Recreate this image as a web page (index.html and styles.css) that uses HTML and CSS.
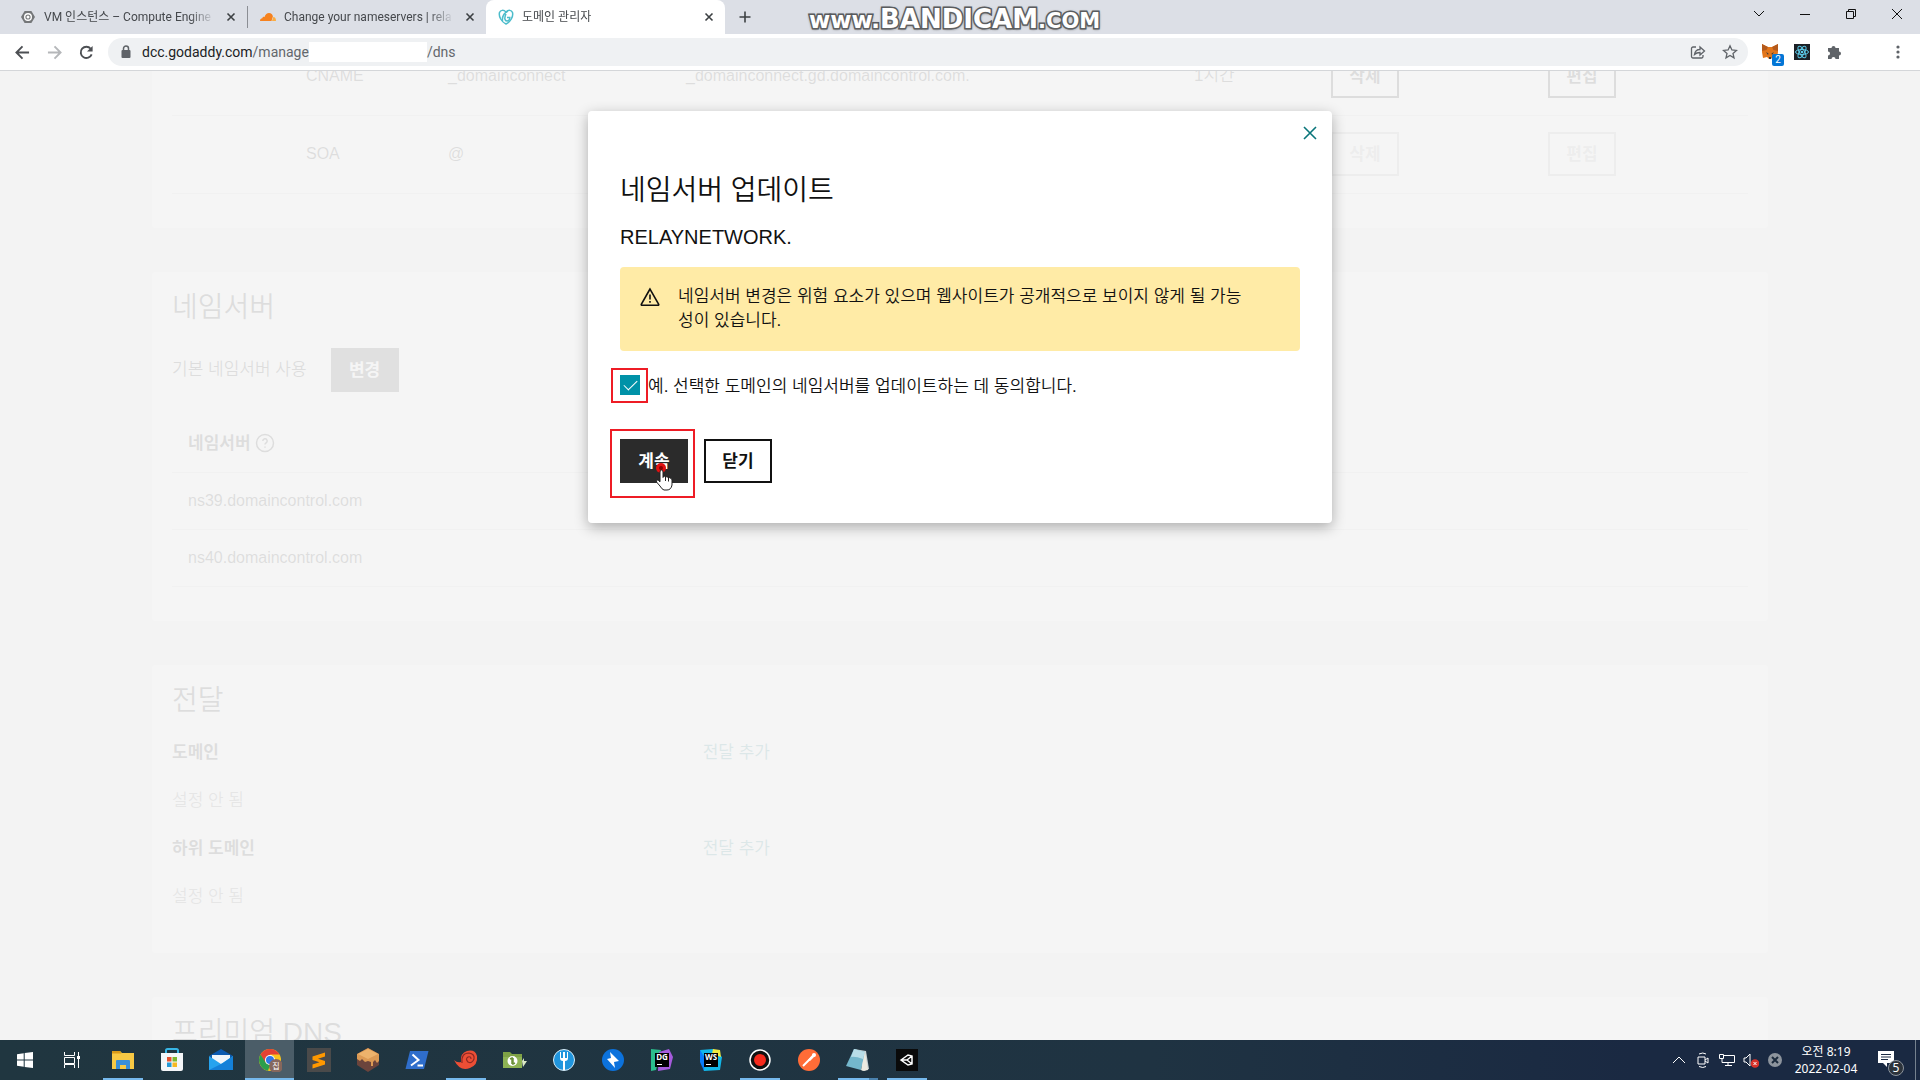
FILE: index.html
```html
<!DOCTYPE html>
<html lang="ko">
  <head>
    <meta charset="UTF-8">
    <title>도메인 관리자</title>
    <link rel="stylesheet" href="styles.css">
  </head>
  <body>
    <header class="browser">
      <div class="tabstrip">
        <div class="tab">
          <svg class="favicon" viewBox="0 0 16 16"><path d="M4.6 2h6.8L15 8l-3.600 6H4.600L1 8z" fill="#757779"/><circle cx="8" cy="8" r="3.300" fill="none" stroke="#fff" stroke-width="1.400"/><circle cx="8" cy="8" r="1.500" fill="#fff"/></svg>
          <span class="tab-title">VM 인스턴스 – Compute Engine</span>
          <button class="tab-close" aria-label="탭 닫기"><svg viewBox="0 0 16 16"><path d="M4.500 4.500l7 7M11.500 4.500l-7 7"/></svg></button>
        </div>
        <div class="tab divided">
          <svg class="favicon" viewBox="0 0 16 16"><path d="M0 12c0-1.700 1-2.600 2.300-2.700C2.500 8 3.700 7.500 4.600 8 5.300 5.500 7 4 9 4c2.200 0 3.600 1.500 3.900 3.500L11.500 12z" fill="#f6821f"/><path d="M12 12l1.300-4C15 8 16 9.500 16 12z" fill="#fbad41"/></svg>
          <span class="tab-title">Change your nameservers | rela</span>
          <button class="tab-close" aria-label="탭 닫기"><svg viewBox="0 0 16 16"><path d="M4.500 4.500l7 7M11.500 4.500l-7 7"/></svg></button>
        </div>
        <div class="tab active">
          <svg class="favicon" viewBox="0 0 16 16" fill="none" stroke="#4cbccb" stroke-width="1.500"><path d="M8 3C5.500.500 2.500 1 1.500 3.500.500 7.500 3.500 13 8 15c4.500-2 7.500-7.500 6.500-11.500C13.500 1 10.500.500 8 3z"/><path d="M4.500 12C4 7.500 6 4 10 2M9 8.500h2.800c0 2.500-1.300 3.500-2.800 3.500-2.300 0-3-3-1-7"/></svg>
          <span class="tab-title">도메인 관리자</span>
          <button class="tab-close" aria-label="탭 닫기"><svg viewBox="0 0 16 16"><path d="M4.500 4.500l7 7M11.500 4.500l-7 7"/></svg></button>
        </div>
        <button class="new-tab" aria-label="새 탭"><svg viewBox="0 0 16 16"><path d="M8 2.500v11M2.500 8h11"/></svg></button>
        <div class="watermark"><span class="wm-www">www.</span><span class="wm-name">BANDICAM</span><span class="wm-com">.COM</span></div>
        <div class="window-buttons">
          <button aria-label="탭 검색"><svg viewBox="0 0 12 12"><path d="M1 3l5 5 5-5"/></svg></button>
          <button aria-label="최소화"><svg viewBox="0 0 12 12"><path d="M1 6.500h10"/></svg></button>
          <button aria-label="이전 크기로"><svg viewBox="0 0 12 12"><path d="M1.500 3.500h7v7h-7zM3.500 3.500v-2h7v7h-2"/></svg></button>
          <button aria-label="닫기"><svg viewBox="0 0 12 12"><path d="M1 1l10 10M11 1L1 11"/></svg></button>
        </div>
      </div>
      <div class="toolbar">
        <button class="nav-button" aria-label="뒤로"><svg viewBox="0 0 16 16"><path d="M15 8H2M8 1.500L1.500 8 8 14.500"/></svg></button>
        <button class="nav-button off" aria-label="앞으로"><svg viewBox="0 0 16 16"><path d="M1 8h13M8 1.500L14.500 8 8 14.500"/></svg></button>
        <button class="nav-button" aria-label="새로고침"><svg viewBox="0 0 16 16"><path d="M13.500 10A6 6 0 1 1 12.500 4"/><path d="M14.500 1v6h-6z" fill="#4c4f53" stroke="none"/></svg></button>
        <div class="address">
          <svg class="lock" viewBox="0 0 12 14"><rect x="1.500" y="5" width="9" height="8" rx="1" fill="#5f6368"/><path d="M3.500 5V3.500a2.500 2.500 0 0 1 5 0V5" fill="none" stroke="#5f6368" stroke-width="1.500"/></svg>
          <span class="url"><b>dcc.godaddy.com</b>/manage</span>
          <span class="redacted"></span>
          <span class="url">/dns</span>
          <div class="address-actions">
            <svg viewBox="0 0 16 16"><path d="M6 3H3a1.500 1.500 0 0 0-1.500 1.500v8A1.500 1.500 0 0 0 3 14h8.500a1.500 1.500 0 0 0 1.500-1.500V11"/><path d="M4.500 10.500c.5-3.500 2.500-5 5.500-5V3l4.500 4L10 11V8.500c-2.500 0-4 .5-5.500 2z"/></svg>
            <svg viewBox="0 0 16 16"><path d="M8 1.800l1.900 4.200 4.600.4-3.500 3 1 4.500L8 11.500l-4 2.400 1-4.500-3.500-3 4.600-.4z"/></svg>
          </div>
        </div>
        <div class="extensions">
          <div class="fox">
            <svg viewBox="0 0 16 16"><path d="M0 0l6 3h4l6-3v8l-1 6-4-1-2 2H7l-2-2-4 1-1-6z" fill="#e2761b"/><path d="M0 0l6 3-1.500 3L0 7zM16 0l-6 3 1.500 3L16 7z" fill="#b45a1c"/><path d="M4 8l2.500 1.500L6 11zM12 8L9.500 9.500 10 11zM7 13h2v2H7z" fill="#3a3a3a"/></svg>
            <span class="fox-count">2</span>
          </div>
          <svg class="react" viewBox="0 0 16 16"><path d="M0 0h16v16H0z" fill="#1c2026"/><g fill="none" stroke="#5ccbea"><ellipse cx="8" cy="8" rx="6.500" ry="2.500"/><ellipse cx="8" cy="8" rx="6.500" ry="2.500" transform="rotate(60 8 8)"/><ellipse cx="8" cy="8" rx="6.500" ry="2.500" transform="rotate(120 8 8)"/></g><circle cx="8" cy="8" r="1.300" fill="#5ccbea"/></svg>
          <svg class="puzzle" viewBox="0 0 16 16"><path d="M2 4h3.500a2 2 0 1 1 4 0H13v3.500a2 2 0 1 1 0 4V15H9.500a2 2 0 0 0-4 0H2v-3.500a2 2 0 0 0 0-4z" fill="#5f6368"/></svg>
          <svg class="dots" viewBox="0 0 16 16" fill="#5f6368"><circle cx="8" cy="3" r="1.600"/><circle cx="8" cy="8" r="1.600"/><circle cx="8" cy="13" r="1.600"/></svg>
        </div>
      </div>
    </header>

    <div class="viewport">
      <main class="page">
        <section class="card records">
          <table class="record-table">
            <colgroup><col class="c-check"><col class="c-type"><col class="c-name"><col class="c-value"><col class="c-ttl"><col class="c-delete"><col></colgroup>
            <tr>
              <td></td>
              <td>CNAME</td>
              <td>_domainconnect</td>
              <td>_domainconnect.gd.domaincontrol.com.</td>
              <td class="ttl">1시간</td>
              <td><button class="btn">삭제</button></td>
              <td><button class="btn">편집</button></td>
            </tr>
            <tr>
              <td></td>
              <td>SOA</td>
              <td>@</td>
              <td></td>
              <td></td>
              <td><button class="btn" disabled>삭제</button></td>
              <td><button class="btn" disabled>편집</button></td>
            </tr>
          </table>
        </section>

        <section class="card">
          <h2>네임서버</h2>
          <div class="ns-current">
            <span>기본 네임서버 사용</span>
            <button class="btn primary">변경</button>
          </div>
          <table class="ns-table">
            <tr><th>네임서버 <svg class="help" viewBox="0 0 20 20"><circle cx="10" cy="10" r="8.500"/><path d="M7.800 8a2.200 2.200 0 1 1 3.200 2c-.8.400-1 .8-1 1.500M10 13.500v1.300"/></svg></th></tr>
            <tr><td>ns39.domaincontrol.com</td></tr>
            <tr><td>ns40.domaincontrol.com</td></tr>
          </table>
        </section>

        <section class="card forwarding">
          <h2>전달</h2>
          <div class="forward-grid">
            <strong>도메인</strong>
            <a href="#">전달 추가</a>
            <span class="unset">설정 안 됨</span>
            <strong>하위 도메인</strong>
            <a href="#">전달 추가</a>
            <span class="unset">설정 안 됨</span>
          </div>
        </section>

        <section class="card">
          <h2>프리미엄 DNS</h2>
        </section>
      </main>

      <div class="overlay">
        <div class="modal" role="dialog" aria-labelledby="modal-title">
          <div class="modal-head">
            <button class="modal-close" aria-label="닫기"><svg viewBox="0 0 20 20"><path d="M4 4l12 12M16 4L4 16"/></svg></button>
          </div>
          <div class="modal-body">
            <h1 id="modal-title">네임서버 업데이트</h1>
            <p class="domain">RELAYNETWORK.</p>
            <div class="alert">
              <svg viewBox="0 0 20 20"><path d="M10 2L1.300 17.300q-.3.900.7.900h16q1 0 .7-.9zM10 7.500v5M10 14v1.800"/></svg>
              <p>네임서버 변경은 위험 요소가 있으며 웹사이트가 공개적으로 보이지 않게 될 가능성이 있습니다.</p>
            </div>
            <div class="consent">
              <span class="marked mark-check"><input type="checkbox" id="agree" checked></span>
              <label for="agree">예. 선택한 도메인의 네임서버를 업데이트하는 데 동의합니다.</label>
            </div>
            <div class="actions">
              <span class="marked mark-button">
                <button class="btn primary">계속</button>
                <svg class="pointer" viewBox="0 0 22 30"><circle cx="8" cy="7" r="5" fill="#e01010"/><circle cx="8" cy="7" r="2" fill="#8a0000"/><path d="M7 11q0-2 1.500-2t1.500 2v5.500l1-1.500 2 .5 1 .5 2 .3 1 .7q2 .2 2 2V24q-1 5-5 5h-3q-2-.5-4-4l-3.500-4q-.7-1.500.7-2 1 0 2.800 1.800z" fill="#fff" stroke="#222"/><path d="M12.500 15.500V20M15.500 16v4.500" stroke="#222" fill="none"/></svg>
              </span>
              <button class="btn">닫기</button>
            </div>
          </div>
        </div>
      </div>
    </div>

    <footer class="taskbar">
      <nav class="apps">
        <button class="app" aria-label="시작"><svg viewBox="0 0 24 24" fill="#fff"><path d="M4 6.300l6.700-1v6.200H4zM11.700 5.100L20 4v7.500h-8.300zM4 12.500h6.700v6.200L4 17.700zM11.700 12.500H20V20l-8.300-1.100z"/></svg></button>
        <button class="app" aria-label="작업 보기"><svg viewBox="0 0 24 24" fill="none" stroke="#fff"><path d="M2.500 4v3.500h10V4M2.500 9.500h10v6h-10zM2.500 20v-3.500h10V20M16.500 4v16"/><path d="M15 8h3v3h-3z" fill="#fff" stroke="none"/></svg></button>
        <button class="app running" aria-label="파일 탐색기"><svg viewBox="0 0 24 24"><path d="M1 3h8l2 2h12v16H1z" fill="#f8c944"/><path d="M1 3h8l1.500 2.500H1z" fill="#d99a18"/><path d="M5 21v-8q0-1 1-1h12q1 0 1 1v8h-4v-4H9v4z" fill="#3a8fd8"/></svg></button>
        <button class="app" aria-label="Store"><svg viewBox="0 0 24 24"><path d="M6 7V2.500Q6 1 7.500 1h9Q18 1 18 2.500V7" fill="none" stroke="#38b6e6" stroke-width="2"/><path d="M1 5h22v16q0 2-2 2H3q-2 0-2-2z" fill="#f4f6f8"/><path d="M7 9h4.500v4.500H7z" fill="#e8502b"/><path d="M12.500 9H17v4.500h-4.500z" fill="#7cb82f"/><path d="M7 14.500h4.500V19H7z" fill="#2499d6"/><path d="M12.500 14.500H17V19h-4.500z" fill="#f6b820"/></svg></button>
        <button class="app" aria-label="메일"><svg viewBox="0 0 24 24"><path d="M0 8l12-7 12 7-12 7z" fill="#0d5bb0"/><path d="M3 7h18v5l-9 5-9-5z" fill="#f2f6fa"/><path d="M0 8l12 8 12-8v14H0z" fill="#26a3ee"/><path d="M0 22l14-7L24 8v14z" fill="#1480d8"/></svg></button>
        <button class="app current" aria-label="Chrome"><svg viewBox="0 0 24 24"><circle cx="12" cy="12" r="11" fill="#f9c51c"/><path d="M2.500 6.500A11 11 0 0 1 21.500 6.500H12L7 15z" fill="#e34133"/><path d="M2.500 6.500L8 15l4 2-2 5.800A11 11 0 0 1 2.500 6.500z" fill="#2c9e4b"/><circle cx="12" cy="12" r="5" fill="#fff"/><circle cx="12" cy="12" r="4" fill="#2f78e8"/><circle cx="18" cy="18" r="7" fill="#86675d"/><text x="18" y="21" text-anchor="middle" class="chrome-user">집</text></svg></button>
        <button class="app" aria-label="Sublime Text"><svg viewBox="0 0 24 24"><path d="M0 0h24v24H0z" fill="#4a4a4a"/><path d="M5.500 8.500L18 4.500v4l-7 2.200 7 2.300v3.500L5.500 20.500v-4l7-2.200-7-2.300z" fill="#ff9800"/></svg></button>
        <button class="app" aria-label="Minecraft"><svg viewBox="0 0 24 24"><path d="M12 0l11 6v11l-11 7L1 17V6z" fill="#6b443c"/><path d="M12 0l11 6v7l-2 2-2-3-2 2v4h-2v-4l-3-1-3 1-3-3-2 2-3-2V6z" fill="#dc9a54"/><path d="M12 1l10 5-10 5L2 6z" fill="#edb36c"/></svg></button>
        <button class="app" aria-label="PowerShell"><svg viewBox="0 0 24 24"><path d="M5 3h18.500L19 21H.5z" fill="#2f6ecb"/><path d="M7.500 6.500l6 5.500-7.500 5.500M12.500 17.500H18" fill="none" stroke="#fff" stroke-width="2"/></svg></button>
        <button class="app running" aria-label="Nautilus"><svg viewBox="0 0 24 24"><path d="M0 12q3 3 7 2-1-9 6-11 8-2 10 5 1 9-7 12-10 4-16-8z" fill="#ec4e35"/><path d="M8 15q-1-10 7-10 6 1 5 6-2 5-6 3-3-3 0-5 3-1 3 2" fill="none" stroke="#8d2823" stroke-width="1.200"/></svg></button>
        <button class="app" aria-label="WinSCP"><svg viewBox="0 0 24 24"><path d="M0 4h7l2 2h10v14H0z" fill="#7fa246"/><path d="M0 9h19v11H0z" fill="#8eb354"/><circle cx="9.500" cy="13" r="5" fill="#fff"/><path d="M7 11l2-1v6M12 15l-2 1v-6" fill="none" stroke="#6b9138" stroke-width="1.500"/><path d="M19 13l2-3v3h3l-4 6z" fill="#dbe9c5"/></svg></button>
        <button class="app" aria-label="Fork"><svg viewBox="0 0 24 24"><circle cx="12" cy="12" r="10.500" fill="#2095dd" stroke="#d9edf8"/><path d="M8 4v6q0 3 3 3v9h2v-9q3 0 3-3V4h-1v6h-2V4h-2v6H9V4z" fill="#fff"/></svg></button>
        <button class="app" aria-label="Bolt"><svg viewBox="0 0 24 24"><circle cx="12" cy="12" r="11" fill="#0c72dc"/><path d="M9 4l1 6-4 1 8 9-1-6 5-1z" fill="#fff"/></svg></button>
        <button class="app" aria-label="DataGrip"><svg viewBox="0 0 24 24"><path d="M1 1l10 1L6 22l-5 1z" fill="#2bbd8c"/><path d="M9 4l10-3 4 8-3 12-12 2z" fill="#a65bdd"/><path d="M5 5h14v14H5z" fill="#000"/><path d="M7 16.500h5" stroke="#fff"/><text x="12" y="12" text-anchor="middle" class="ide">DG</text></svg></button>
        <button class="app" aria-label="WebStorm"><svg viewBox="0 0 24 24"><path d="M1 2l13-1 9 8-2 13-16 1z" fill="#12b7e8"/><path d="M14 1l7 1 1 7-9-3z" fill="#f0e93e"/><path d="M1 2l5 8-1 13-4-9z" fill="#087cfa"/><path d="M5 5h14v14H5z" fill="#000"/><path d="M7 16.500h5" stroke="#fff"/><text x="12" y="12" text-anchor="middle" class="ide">WS</text></svg></button>
        <button class="app running" aria-label="Bandicam"><svg viewBox="0 0 24 24"><circle cx="12" cy="12" r="10" fill="#111" stroke="#fff" stroke-width="1.500"/><circle cx="12" cy="12" r="6" fill="#f62a1c"/></svg></button>
        <button class="app" aria-label="Postman"><svg viewBox="0 0 24 24"><circle cx="12" cy="12" r="11" fill="#ff6c37"/><path d="M6 18l9-9" stroke="#fff" stroke-width="2"/><path d="M11 12l5-6 2 2-5 5z" fill="#fff"/><circle cx="17" cy="7" r="2" fill="#fff"/></svg></button>
        <button class="app running stacked" aria-label="메모장"><svg viewBox="0 0 24 24"><path d="M8 1l12 2 3 18-5 2z" fill="#c9d3d5"/><path d="M8 1l11 3-4 18-15-4z" fill="#74b7cc"/><path d="M8 1l11 3-2 7Q9 8 5 9z" fill="#b8dde8"/><path d="M19 4l3 18-5 1-2-1z" fill="#eceae0"/></svg></button>
        <button class="app running" aria-label="Unity"><svg viewBox="0 0 24 24"><path d="M1 1h22v22H1z" fill="#0a0a0a"/><path d="M6 12l7-5 4 1v8l-4 1zM6 12h6M12 12l5-4M12 12l5 4" fill="none" stroke="#fff" stroke-width="1.500"/></svg></button>
      </nav>
      <div class="tray">
        <svg viewBox="0 0 16 16"><path d="M2 11l6-6 6 6"/></svg>
        <svg viewBox="0 0 16 16"><path d="M3 5h7v7H3zM10 8l3-2v5l-3-2M4 2q4-2 7 0M4 14.500q4 2 7 0"/></svg>
        <svg viewBox="0 0 16 16"><path d="M4 3.500h11.500v7H3V7M.5 2.500h4v4h-4zM9 10.500v3M6 13.500h7"/></svg>
        <svg viewBox="0 0 16 16"><path d="M1 6h2l4-4v12l-4-4H1z"/><circle cx="12" cy="11.500" r="4.300" fill="#d8322a" stroke="none"/><path d="M10.500 10l3 3M13.500 10l-3 3"/></svg>
        <svg viewBox="0 0 16 16"><circle cx="8" cy="8" r="7" fill="#8d949d" stroke="none"/><path d="M5 5l6 6M11 5l-6 6" stroke="#1b2a3c" stroke-width="2"/></svg>
        <div class="clock"><span>오전 8:19</span><span>2022-02-04</span></div>
        <button class="notice" aria-label="알림">
          <svg viewBox="0 0 24 24"><path d="M2 3h16v12h-7v4l-4-4H2z" fill="#fff" stroke="none"/><path d="M5 6.500h10M5 9h10M5 11.500h7" stroke="#1a2942"/></svg>
          <span class="notice-count">5</span>
        </button>
      </div>
    </footer>
  </body>
</html>
```
FILE: styles.css
```css
* {
	box-sizing: border-box;
}
body {
	margin: 0;
	height: 100vh;
	display: flex;
	flex-direction: column;
	overflow: hidden;
	color: #111;
	font-family: "Liberation Sans", "Noto Sans CJK KR", sans-serif;
	font-size: 16px;
	line-height: 24px;
}
button {
	margin: 0;
	padding: 0;
	border: 0;
	background: none;
	font-family: inherit;
}
h1, h2, p {
	margin: 0;
}
svg {
	display: block;
	flex: none;
}

/* browser window */
.browser {
	flex: none;
	font-family: Roboto, "Noto Sans CJK KR", sans-serif;
	border-bottom: 1px solid #d4d6d9;
}
.tabstrip {
	display: flex;
	height: 34px;
	padding-left: 8px;
	background: #dcdfe6;
}
.tab {
	display: flex;
	align-items: center;
	gap: 8px;
	width: 239px;
	padding: 0 8px 0 12px;
	font-size: 12px;
	color: #45484c;
}
.tab.divided {
	border-left: 1px solid #8b8e94;
	border-image: linear-gradient(transparent 20%, #8b8e94 20%, #8b8e94 80%, transparent 80%) 1;
}
.tab.active {
	background: #fff;
	border-radius: 8px 8px 0 0;
}
.favicon {
	width: 16px;
	height: 16px;
}
.tab-title {
	flex: 1;
	white-space: nowrap;
	-webkit-mask-image: linear-gradient(to right, #000 85%, transparent);
	mask-image: linear-gradient(to right, #000 85%, transparent);
}
.tab-close svg, .new-tab svg {
	width: 16px;
	height: 16px;
	stroke: #3c4043;
	stroke-width: 1.6;
}
.new-tab {
	width: 40px;
	display: grid;
	place-items: center;
}
.watermark {
	display: flex;
	align-items: baseline;
	margin-left: 44px;
	color: #fff;
	font-family: "DejaVu Sans", sans-serif;
	font-weight: bold;
	line-height: 38px;
	-webkit-text-stroke: 3px #55585c;
	paint-order: stroke fill;
	text-shadow: 0 0 3px #666, 0 1px 3px #666;
}
.wm-www {
	font-size: 23px;
}
.wm-name {
	font-size: 26px;
}
.wm-com {
	font-size: 21px;
}
.window-buttons {
	display: flex;
	margin-left: auto;
}
.window-buttons button {
	display: grid;
	place-items: center;
	width: 46px;
	height: 28px;
}
.window-buttons svg {
	width: 12px;
	height: 12px;
	fill: none;
	stroke: #111;
}
.toolbar {
	display: flex;
	align-items: center;
	height: 36px;
	padding-left: 6px;
	background: #fff;
}
.nav-button {
	display: grid;
	place-items: center;
	width: 32px;
	height: 32px;
}
.nav-button svg {
	width: 15px;
	height: 15px;
	fill: none;
	stroke: #4c4f53;
	stroke-width: 2;
}
.nav-button.off svg {
	stroke: #b5b7ba;
}
.address {
	flex: 1;
	display: flex;
	align-items: center;
	height: 28px;
	margin-left: 6px;
	padding: 0 10px 0 12px;
	border-radius: 14px;
	background: #eff1f3;
	color: #63676c;
	font-size: 14px;
}
.lock {
	width: 12px;
	height: 14px;
	margin-right: 10px;
}
.url b {
	color: #202124;
	font-weight: normal;
}
.redacted {
	width: 118px;
	height: 20px;
	background: #fff;
}
.address-actions {
	display: flex;
	gap: 16px;
	margin-left: auto;
}
.address-actions svg {
	width: 16px;
	height: 16px;
	fill: none;
	stroke: #5f6368;
	stroke-width: 1.3;
}
.extensions {
	display: flex;
	align-items: center;
	gap: 16px;
	padding: 0 14px;
}
.extensions svg {
	width: 16px;
	height: 16px;
}
.extensions .dots {
	margin-left: 32px;
}
.fox {
	position: relative;
}
.fox-count {
	position: absolute;
	left: 10px;
	top: 10px;
	width: 12px;
	height: 12px;
	border-radius: 2px;
	background: #0376d6;
	color: #fff;
	font-size: 10px;
	line-height: 12px;
	text-align: center;
}

/* domain page */
.viewport {
	position: relative;
	flex: 1;
	min-height: 0;
	overflow: hidden;
	background: #ebebeb;
}
.page {
	display: flex;
	flex-direction: column;
	gap: 44px;
	padding: 0 152px;
}
.card {
	padding: 18px 20px 34px;
	border-radius: 4px;
	background: #fff;
}
/* the list is scrolled part of the way */
.records {
	margin-top: -34px;
	padding-top: 0;
}
.forwarding {
	padding-bottom: 44px;
}
h1, h2 {
	font-size: 28px;
	font-weight: 350;
	line-height: 36px;
}
h2 {
	margin-bottom: 22px;
}
table {
	width: 100%;
	border-collapse: collapse;
	table-layout: fixed;
}
td, th {
	padding: 16px;
	border-bottom: 1px solid #d6d6d6;
	text-align: left;
}
.record-table td {
	height: 78px;
	white-space: nowrap;
}
.c-check { width: 118px; }
.c-type { width: 142px; }
.c-name { width: 238px; }
.c-value { width: 508px; }
.c-ttl { width: 137px; }
.c-delete { width: 217px; }
.ns-current, .forward-grid, th, label, .alert, .ttl {
	font-size: 17px;
	font-weight: 350;
}
.ns-current {
	display: flex;
	align-items: center;
	gap: 24px;
	margin-bottom: 24px;
}
.btn {
	width: 68px;
	height: 44px;
	padding-bottom: 3px;
	border: 2px solid #111;
	background: #fff;
	color: #111;
	font-size: 17px;
	font-weight: bold;
}
.btn.primary {
	border-color: #2b2b2b;
	background: #2b2b2b;
	color: #fff;
}
.btn:disabled {
	border-color: #aaa;
	color: #aaa;
}
th, strong {
	font-weight: bold;
}
.help {
	display: inline-block;
	width: 20px;
	height: 20px;
	vertical-align: -4px;
	fill: none;
	stroke: #111;
	stroke-width: 1.5;
}
.forward-grid {
	display: grid;
	grid-template-columns: repeat(3, 1fr);
	gap: 24px 16px;
}
.forward-grid strong, .forward-grid .unset {
	grid-column: 1;
}
.forward-grid a {
	color: #09757a;
	font-weight: normal;
	text-decoration: none;
}
.unset {
	color: #666;
}

/* dialog */
.overlay {
	position: absolute;
	inset: 0;
	display: flex;
	justify-content: center;
	align-items: flex-start;
	padding: 40px 24px;
	background: rgba(244, 244, 244, .9);
}
.modal {
	width: 100%;
	max-width: 744px;
	border-radius: 4px;
	background: #fff;
	box-shadow: 0 4px 14px rgba(0, 0, 0, .3);
}
.modal-head {
	display: flex;
	justify-content: flex-end;
	padding: 12px 12px 0;
}
.modal-close svg {
	width: 20px;
	height: 20px;
	stroke: #09757a;
	stroke-width: 1.6;
}
.modal-body {
	padding: 30px 32px 40px;
}
.domain {
	margin: 14px 0 16px;
	font-size: 20px;
	line-height: 28px;
}
.alert {
	display: flex;
	gap: 18px;
	padding: 18px 48px 18px 20px;
	border-radius: 4px;
	background: #ffeba6;
}
.alert svg {
	width: 20px;
	height: 20px;
	margin-top: 2px;
	fill: none;
	stroke: #111;
	stroke-width: 1.6;
}
.consent {
	display: flex;
	align-items: center;
	gap: 8px;
	margin: 24px 0 40px;
}
.consent input {
	appearance: none;
	display: grid;
	place-items: center;
	width: 20px;
	height: 20px;
	margin: 0 0 4px;
	background: #0092a8;
}
.consent input:checked::after {
	content: "";
	width: 6px;
	height: 12px;
	margin-bottom: 4px;
	border: solid #fff;
	border-width: 0 1px 1px 0;
	transform: rotate(45deg);
}
.marked {
	position: relative;
	display: block;
}
.marked::before {
	content: "";
	position: absolute;
	border: 2px solid #ee1c25;
}
.mark-check::before {
	inset: -7px -8px -4px -9px;
}
.mark-button::before {
	inset: -10px -7px -15px -10px;
}
.actions {
	display: flex;
	gap: 16px;
}
.pointer {
	position: absolute;
	left: 33px;
	top: 22px;
	width: 22px;
	height: 30px;
}

/* windows taskbar */
.taskbar {
	flex: none;
	display: flex;
	justify-content: space-between;
	height: 40px;
	background: linear-gradient(to right, #203640, #1f3342 60%, #1a2942 85%);
	color: #fff;
	font-family: "Noto Sans", "Noto Sans CJK KR", sans-serif;
}
.apps {
	display: flex;
}
.app {
	display: grid;
	place-items: center;
	width: 49px;
	height: 40px;
}
.app svg {
	width: 24px;
	height: 24px;
}
.running {
	background: linear-gradient(#76b9ed, #76b9ed) bottom / 40px 2px no-repeat;
}
.stacked {
	background-image: linear-gradient(to right, #76b9ed 78%, #4b82ae 78%);
}
.current {
	background: linear-gradient(#76b9ed, #76b9ed) bottom / 100% 2px no-repeat #4b5d68;
}
.chrome-user {
	fill: #fff;
	font-size: 8px;
}
.ide {
	fill: #fff;
	font-size: 8px;
	font-weight: bold;
}
.tray {
	display: flex;
	align-items: center;
	gap: 8px;
	padding-right: 4px;
}
.tray svg {
	width: 16px;
	height: 16px;
	fill: none;
	stroke: #fff;
}
.clock {
	display: flex;
	flex-direction: column;
	width: 70px;
	margin-right: 7px;
	font-size: 12px;
	line-height: 17px;
	text-align: center;
}
.notice {
	position: relative;
	width: 40px;
	height: 40px;
	border-right: 1px solid #75818e;
}
.tray .notice svg {
	width: 24px;
	height: 24px;
}
.notice-count {
	position: absolute;
	left: 12px;
	top: 20px;
	width: 16px;
	height: 16px;
	border: 1px solid #8d949d;
	border-radius: 8px;
	background: #2c333b;
	color: #fff;
	font-size: 12px;
	line-height: 14px;
}
```
